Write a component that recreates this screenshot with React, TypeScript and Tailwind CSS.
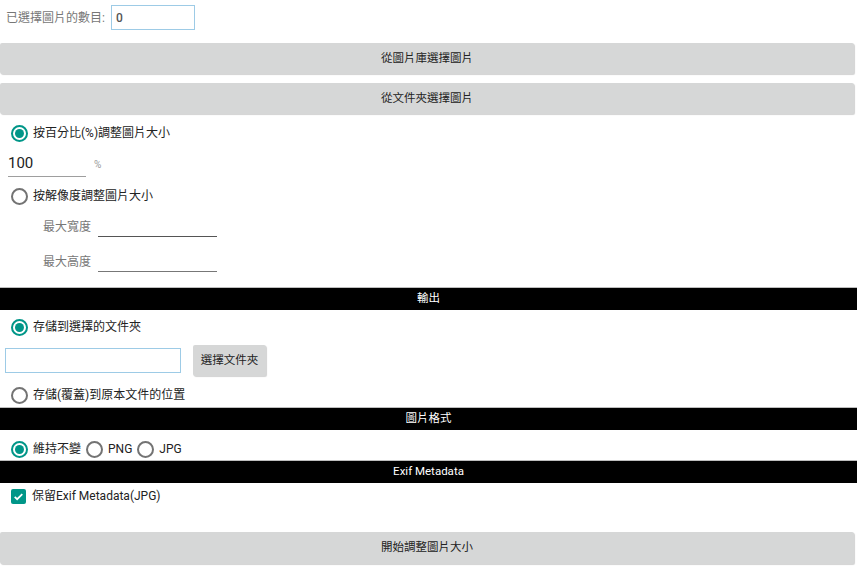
import React from 'react'

const font = { fontFamily: 'Roboto, "Noto Sans CJK TC", sans-serif' }

function Radio({ checked, label }: { checked?: boolean; label: string }) {
  return (
    <div className="flex items-center gap-[5px]">
      <span
        className={
          'flex h-[17px] w-[17px] items-center justify-center rounded-full border-2 ' +
          (checked ? 'border-[#009688]' : 'border-[#737373]')
        }
      >
        {checked && <span className="h-[9px] w-[9px] rounded-full bg-[#009688]" />}
      </span>
      <span className="text-[12px] text-[#222]">{label}</span>
    </div>
  )
}

function GrayButton({ title, className = '' }: { title: string; className?: string }) {
  return (
    <div
      className={
        'flex items-center justify-center rounded-[2px] bg-[#d6d7d7] text-[11.5px] text-[#222] shadow-[1px_1px_1px_rgba(0,0,0,0.18)] ' +
        className
      }
    >
      {title}
    </div>
  )
}

function Header({ title }: { title: string }) {
  return (
    <div className="flex h-[23px] items-center justify-center border-t border-[#bdbdbd] bg-black text-[11.5px] text-white">
      {title}
    </div>
  )
}

export default function App() {
  return (
    <div className="flex h-[573px] w-[857px] flex-col bg-white" style={font}>
      <div className="flex h-[34px] items-center gap-[6px] px-[6px] pt-[1px]">
        <span className="text-[12px] text-[#777]">已選擇圖片的數目:</span>
        <div className="flex h-[25px] w-[84px] items-center border border-[#9dcbe6] px-[4px] text-[12px] font-medium text-[#555]">
          0
        </div>
      </div>

      <div className="mt-[9px] flex flex-col gap-[9px] pr-[3px]">
        <GrayButton title="從圖片庫選擇圖片" className="h-[31px]" />
        <GrayButton title="從文件夾選擇圖片" className="h-[31px]" />
      </div>

      <div className="flex flex-col px-[11px]">
        <div className="mt-[10px]">
          <Radio checked label="按百分比(%)調整圖片大小" />
        </div>
        <div className="mt-[10px] flex items-end gap-[8px]">
          <div className="ml-[-3px] h-[25px] w-[78px] border-b-[1.5px] border-[#9e9e9e] text-[15px] leading-[23px] text-[#222]">
            100
          </div>
          <span className="mb-[5px] text-[10px] text-[#999]">%</span>
        </div>
        <div className="mt-[10px]">
          <Radio label="按解像度調整圖片大小" />
        </div>
        <div className="mt-[8px] flex items-end gap-[7px] pl-[32px]">
          <span className="mb-[1px] text-[12px] text-[#777]">最大寬度</span>
          <div className="h-[24px] w-[119px] border-b border-[#555]" />
        </div>
        <div className="mt-[11px] flex items-end gap-[7px] pl-[32px]">
          <span className="mb-[1px] text-[12px] text-[#777]">最大高度</span>
          <div className="h-[24px] w-[119px] border-b border-[#777]" />
        </div>
      </div>

      <div className="mt-[15px]">
        <Header title="輸出" />
      </div>
      <div className="flex flex-col px-[11px]">
        <div className="mt-[8px]">
          <Radio checked label="存儲到選擇的文件夾" />
        </div>
        <div className="mt-[9px] ml-[-6px] flex items-center gap-[12px]">
          <div className="h-[25px] w-[176px] border border-[#9dcbe6]" />
          <GrayButton title="選擇文件夾" className="h-[31px] w-[73px]" />
        </div>
        <div className="mt-[10px]">
          <Radio label="存儲(覆蓋)到原本文件的位置" />
        </div>
      </div>

      <div className="mt-[3px]">
        <Header title="圖片格式" />
      </div>
      <div className="mt-[10px] flex items-center gap-[5px] px-[11px]">
        <Radio checked label="維持不變" />
        <Radio label="PNG" />
        <Radio label="JPG" />
      </div>

      <div className="mt-[2px]">
        <Header title="Exif Metadata" />
      </div>
      <div className="mt-[4px] flex items-center gap-[6px] px-[11px]">
        <span className="flex h-[15px] w-[15px] items-center justify-center rounded-[2px] bg-[#009688]">
          <svg viewBox="0 0 24 24" className="h-[13px] w-[13px]" fill="none" stroke="white" strokeWidth="3.2">
            <path d="M5 12.5l4.5 4.5L19 7.5" />
          </svg>
        </span>
        <span className="text-[12px] text-[#222]">保留Exif Metadata(JPG)</span>
      </div>

      <div className="mt-[27px] pr-[3px]">
        <GrayButton title="開始調整圖片大小" className="h-[32px]" />
      </div>
    </div>
  )
}
